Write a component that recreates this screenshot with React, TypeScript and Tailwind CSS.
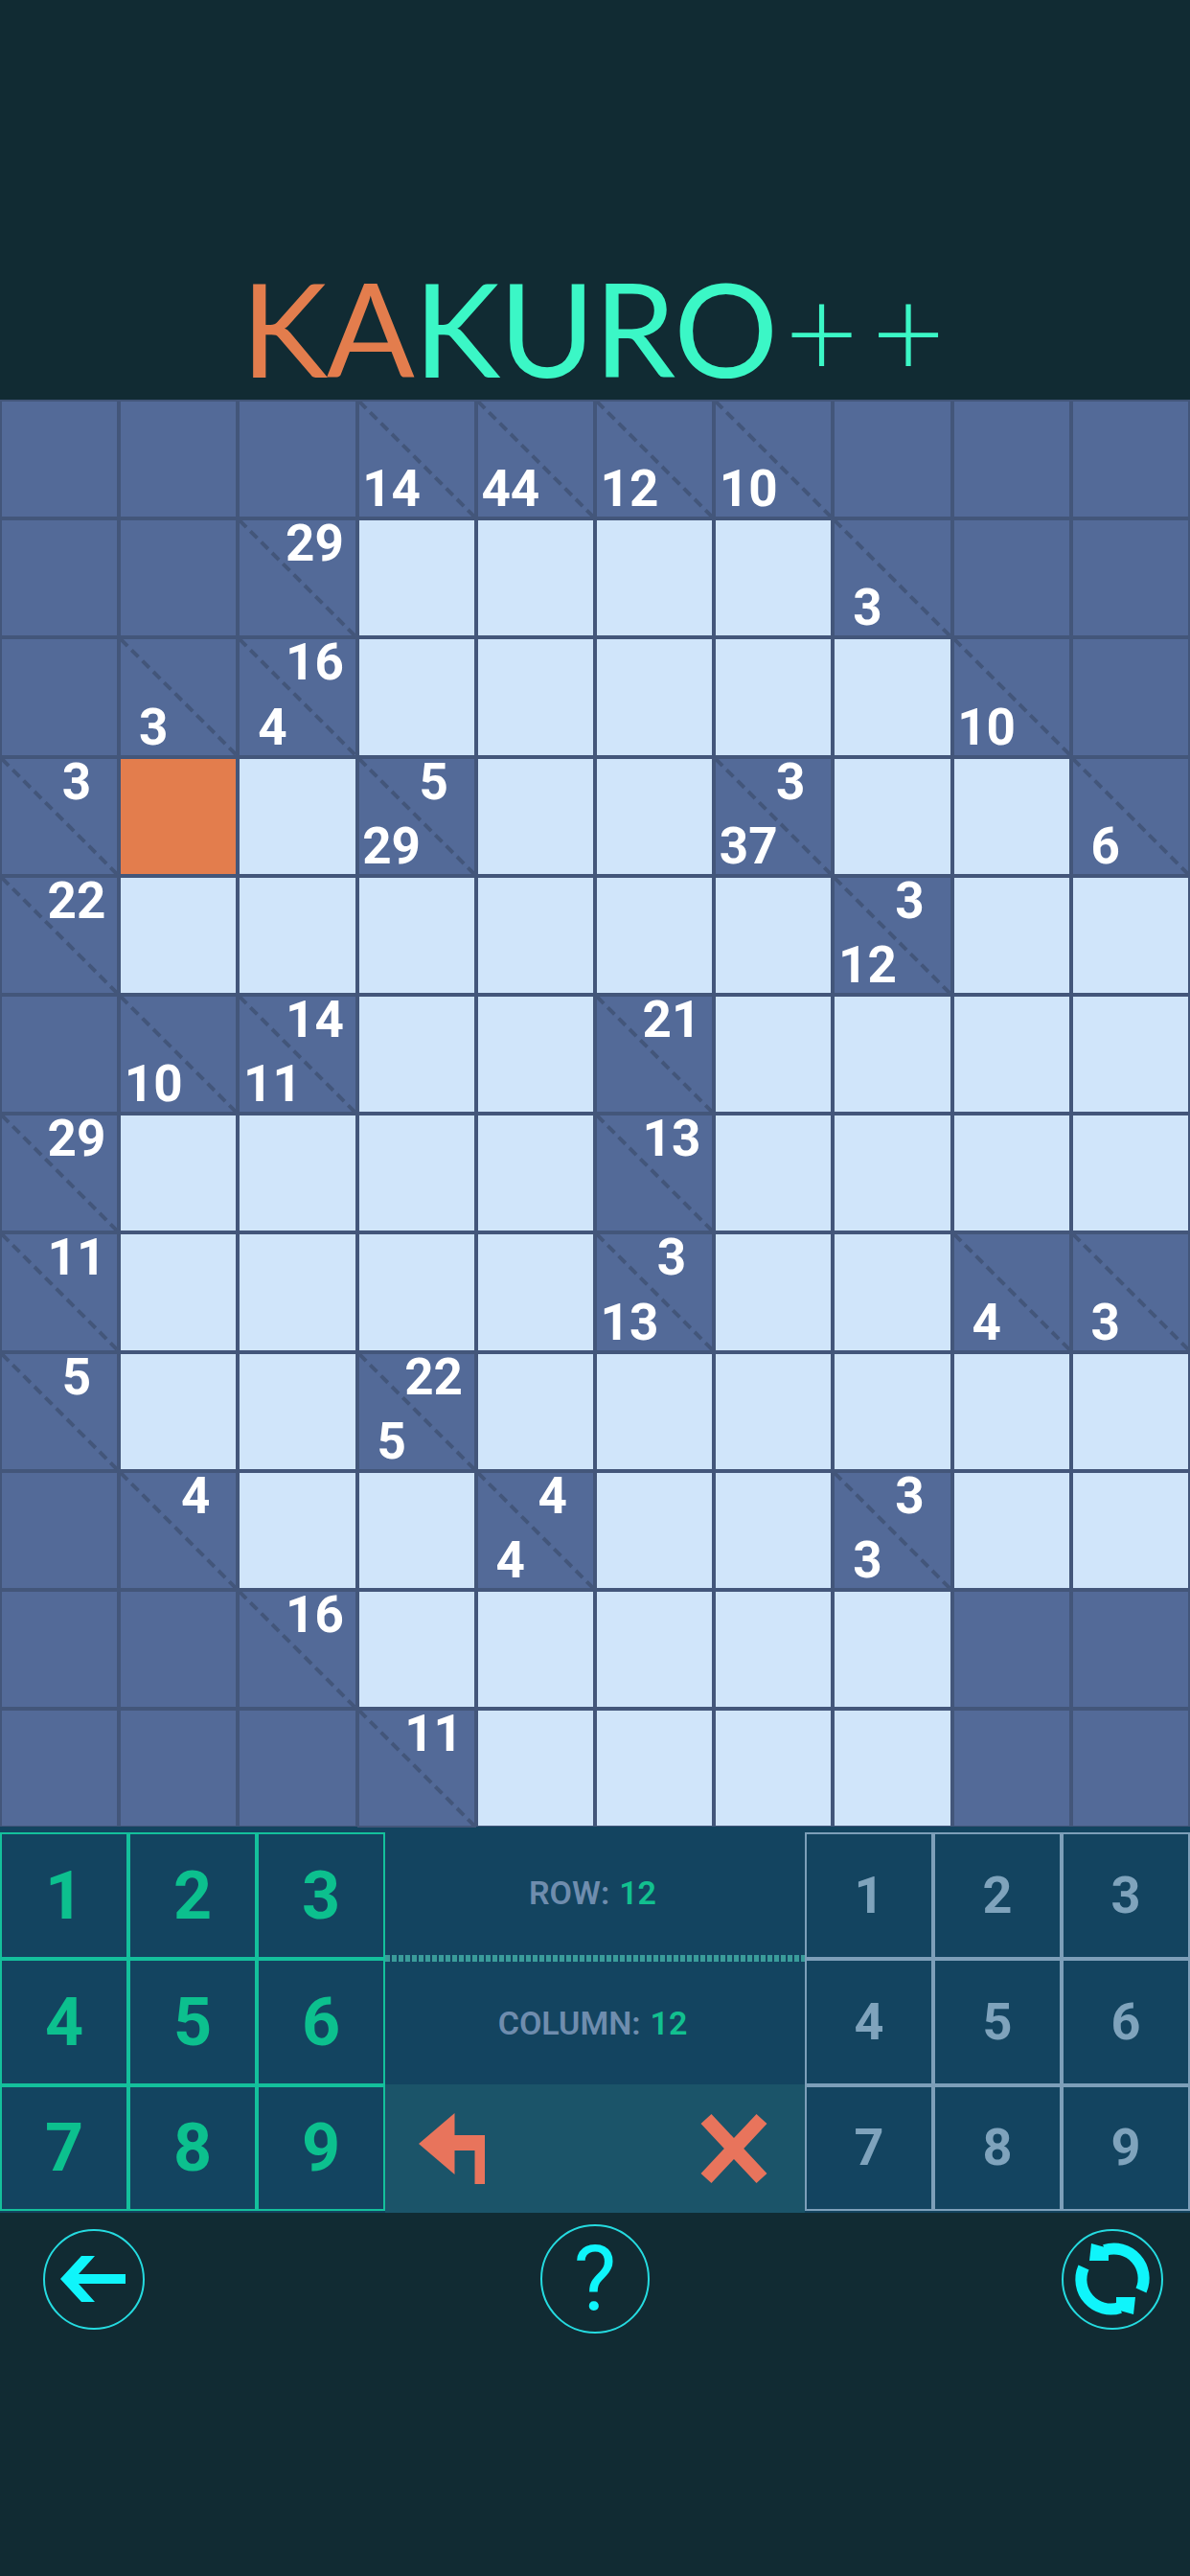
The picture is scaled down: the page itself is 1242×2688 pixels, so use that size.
type Cell = 'p' | 'w' | 'o' | { t?: number; b?: number };

const rows: Cell[][] = [
  ['p', 'p', 'p', { b: 14 }, { b: 44 }, { b: 12 }, { b: 10 }, 'p', 'p', 'p'],
  ['p', 'p', { t: 29 }, 'w', 'w', 'w', 'w', { b: 3 }, 'p', 'p'],
  ['p', { b: 3 }, { t: 16, b: 4 }, 'w', 'w', 'w', 'w', 'w', { b: 10 }, 'p'],
  [{ t: 3 }, 'o', 'w', { t: 5, b: 29 }, 'w', 'w', { t: 3, b: 37 }, 'w', 'w', { b: 6 }],
  [{ t: 22 }, 'w', 'w', 'w', 'w', 'w', 'w', { t: 3, b: 12 }, 'w', 'w'],
  ['p', { b: 10 }, { t: 14, b: 11 }, 'w', 'w', { t: 21 }, 'w', 'w', 'w', 'w'],
  [{ t: 29 }, 'w', 'w', 'w', 'w', { t: 13 }, 'w', 'w', 'w', 'w'],
  [{ t: 11 }, 'w', 'w', 'w', 'w', { t: 3, b: 13 }, 'w', 'w', { b: 4 }, { b: 3 }],
  [{ t: 5 }, 'w', 'w', { t: 22, b: 5 }, 'w', 'w', 'w', 'w', 'w', 'w'],
  ['p', { t: 4 }, 'w', 'w', { t: 4, b: 4 }, 'w', 'w', { t: 3, b: 3 }, 'w', 'w'],
  ['p', 'p', { t: 16 }, 'w', 'w', 'w', 'w', 'w', 'p', 'p'],
  ['p', 'p', 'p', { t: 11 }, 'w', 'w', 'w', 'w', 'p', 'p'],
];

const digits = [1, 2, 3, 4, 5, 6, 7, 8, 9];

function GridCell({ cell }: { cell: Cell }) {
  if (cell === 'p') return <div className="border-2 border-[#43567a] bg-[#536a98]" />;
  if (cell === 'w') return <div className="border-2 border-[#43567a] bg-[#d0e5fa]" />;
  if (cell === 'o') return <div className="border-2 border-[#43567a] bg-[#e37d4d]" />;
  return (
    <div className="relative flex flex-col border-2 border-[#43567a] bg-[#536a98] pt-[1px] pb-[6px] text-[53px] leading-[46px] font-bold text-white">
      <svg className="absolute inset-0 h-full w-full" viewBox="0 0 120 120" preserveAspectRatio="none">
        <line x1="0" y1="0" x2="120" y2="120" stroke="#43567a" strokeWidth="4" strokeDasharray="10 6" />
      </svg>
      {cell.t !== undefined && <span className="relative ml-[42px] w-[72px] text-center">{cell.t}</span>}
      {cell.b !== undefined && <span className="relative mt-auto -ml-[3px] w-[74px] text-center">{cell.b}</span>}
    </div>
  );
}

function Keypad({ active }: { active: boolean }) {
  return (
    <div
      className={
        active
          ? 'grid grid-cols-3 grid-rows-3 text-[70px] font-bold text-[#0cc08e]'
          : 'grid grid-cols-3 grid-rows-3 text-[54px] font-bold text-[#7fa3bc]'
      }
    >
      {digits.map((d) => (
        <div
          key={d}
          className={
            active
              ? 'flex items-center justify-center border-2 border-[#14c09c] bg-[#134460] leading-none'
              : 'flex items-center justify-center border-2 border-[#7d9fb9] bg-[#134460] leading-none'
          }
        >
          {d}
        </div>
      ))}
    </div>
  );
}

function Info({ label }: { label: string }) {
  return (
    <div className="flex flex-1 items-center justify-center pr-[5px] text-[34px] font-semibold text-[#6f8dae]">
      {label}: <span className="ml-[10px] text-[#12c08f]">12</span>
    </div>
  );
}

export default function App() {
  return (
    <div className="flex h-[2688px] w-[1242px] flex-col bg-[#112b33] font-['Roboto',sans-serif]">
      <div className="flex h-[417px] items-end justify-center pl-[10px]">
        <div className="font-['Lato',sans-serif] text-[136px] leading-[148px] font-normal tracking-[-1px] text-[#3bf7c6]">
          <span className="text-[#e37d4d]">KA</span>KURO
          <span className="ml-[8px] text-[132px] font-light tracking-[14px]">++</span>
        </div>
      </div>

      <div className="grid grid-cols-10 auto-rows-[124.2px]">
        {rows.flat().map((c, i) => (
          <GridCell key={i} cell={c} />
        ))}
      </div>

      <div className="mt-[-1px] grid h-[403px] grid-cols-[402px_1fr_402px] bg-[#134460]">
        <div className="grid pt-[6px] pb-[2px]">
          <Keypad active />
        </div>
        <div className="flex flex-col">
          <div className="flex h-[269px] flex-col">
            <div className="flex h-[134px] pt-[4px]">
              <Info label="ROW" />
            </div>
            <div className="h-[7px] bg-[repeating-linear-gradient(90deg,#3a9c9a_0_5px,transparent_5px_7px)]" />
            <Info label="COLUMN" />
          </div>
          <div className="flex flex-1 items-center justify-between bg-[#1b5469] pr-[39px] pl-[35px]">
            <svg width="70" height="74" viewBox="0 0 70 74">
              <polygon fill="#e8745c" points="0,32 37.5,0 37.5,23 69,23 69,74 58.5,74 58.5,39 37.5,39 37.5,64" />
            </svg>
            <svg width="70" height="74" viewBox="0 0 70 74">
              <path d="M6 6 L64 68 M64 6 L6 68" stroke="#e8745c" strokeWidth="15" fill="none" />
            </svg>
          </div>
        </div>
        <div className="grid pt-[6px] pb-[2px]">
          <Keypad active={false} />
        </div>
      </div>

      <div className="flex items-center pt-[12px] pl-[45px]">
        <div className="flex h-[105px] w-[106px] items-center justify-center rounded-full border-2 border-[#25dbe0]">
          <svg width="70" height="48" viewBox="0 0 70 48">
            <polygon fill="#0ff5fb" points="0,24 22,0 36,0 19,19 68,19 68,29 19,29 36,48 22,48" />
          </svg>
        </div>
        <div className="ml-[413px] flex h-[114px] w-[114px] items-center justify-center rounded-full border-2 border-[#25dbe0] text-[94px] leading-none font-normal text-[#0ff5fb]">
          ?
        </div>
        <div className="ml-[430px] flex h-[105px] w-[106px] items-center justify-center rounded-full border-2 border-[#25dbe0]">
          <svg width="90" height="90" viewBox="-45 -45 90 90">
            <path d="M-8 -30 A31 31 0 0 1 30 12" stroke="#0ff5fb" strokeWidth="12" fill="none" />
            <polygon fill="#0ff5fb" points="-22,-37 -24,-19 -4,-19 -4,-32" />
            <g transform="rotate(180)">
              <path d="M-8 -30 A31 31 0 0 1 30 12" stroke="#0ff5fb" strokeWidth="12" fill="none" />
              <polygon fill="#0ff5fb" points="-22,-37 -24,-19 -4,-19 -4,-32" />
            </g>
          </svg>
        </div>
      </div>
    </div>
  );
}
